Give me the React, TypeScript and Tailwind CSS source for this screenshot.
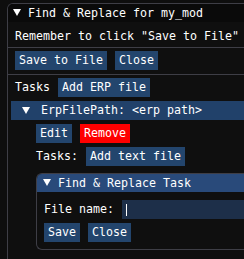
import React from 'react';

const mono = "font-['DejaVu_Sans_Mono','Liberation_Mono',monospace] text-[11.63px] leading-[13px]";

function Tri() {
  return (
    <svg width="8" height="7" viewBox="0 0 8 7" className="shrink-0">
      <polygon points="0,0 8,0 4,7" fill="#ffffff" />
    </svg>
  );
}

function Btn({ label, red }: { label: string; red?: boolean }) {
  return (
    <div className={`h-[19px] px-[4px] flex items-center whitespace-pre text-white ${red ? 'bg-[#ff0000]' : 'bg-[#23456d]'}`}>
      {label}
    </div>
  );
}

function Sep() {
  return <div className="h-px -ml-[7px] bg-[#3e3e46]" />;
}

export default function App() {
  return (
    <div className={`w-[244px] h-[259px] overflow-hidden bg-[#0e0e0e] text-white ${mono}`}>
      {/* main window */}
      <div className="ml-[7px] mt-[3px] w-[290px] h-[300px] border-l border-t border-[#3e3e46] rounded-tl-[6px] overflow-hidden bg-[#0f0f0f]">
        <div className="h-[18px] bg-[#0a0a0a] flex items-center">
          <div className="ml-[5px] mt-[-1px]"><Tri /></div>
          <span className="ml-[7px] whitespace-pre">Find &amp; Replace for my_mod</span>
        </div>

        <div className="pl-[7px] pt-[8px] flex flex-col">
          <div className="h-[13px] whitespace-pre">Remember to click "Save to File"</div>
          <div className="mt-[4px]"><Sep /></div>
          <div className="mt-[3px] flex gap-[8px]">
            <Btn label="Save to File" />
            <Btn label="Close" />
          </div>
          <div className="mt-[4px]"><Sep /></div>
          <div className="mt-[3px] flex gap-[8px] items-center">
            <span className="whitespace-pre">Tasks</span>
            <Btn label="Add ERP file" />
          </div>

          {/* collapsing header */}
          <div className="mt-[4px] -ml-[4px] h-[19px] bg-[#21416a] flex items-center">
            <div className="ml-[11px]"><Tri /></div>
            <span className="ml-[11px] whitespace-pre">ErpFilePath: &lt;erp path&gt;</span>
          </div>

          <div className="ml-[21px] flex flex-col">
            <div className="mt-[4px] flex gap-[8px]">
              <Btn label="Edit" />
              <Btn label="Remove" red />
            </div>
            <div className="mt-[4px] flex gap-[8px] items-center">
              <span className="whitespace-pre">Tasks:</span>
              <Btn label="Add text file" />
            </div>

            {/* nested task window */}
            <div className="mt-[7px] border-l border-t border-b border-[#3e3e46] rounded-l-[6px] overflow-hidden bg-[#0f0f0f]">
              <div className="h-[18px] bg-[#294a7a] flex items-center">
                <div className="ml-[6px] mt-[-1px]"><Tri /></div>
                <span className="ml-[7px] whitespace-pre">Find &amp; Replace Task</span>
              </div>
              <div className="pl-[7px] pt-[8px] pb-[7px] flex flex-col">
                <div className="flex gap-[8px] items-center">
                  <span className="whitespace-pre">File name:</span>
                  <div className="flex-1 h-[19px] bg-[#1d2f49] flex items-center">
                    <div className="ml-[4px] w-px h-[12px] bg-white" />
                  </div>
                </div>
                <div className="mt-[4px] flex gap-[8px]">
                  <Btn label="Save" />
                  <Btn label="Close" />
                </div>
              </div>
            </div>
          </div>
        </div>
      </div>
    </div>
  );
}
